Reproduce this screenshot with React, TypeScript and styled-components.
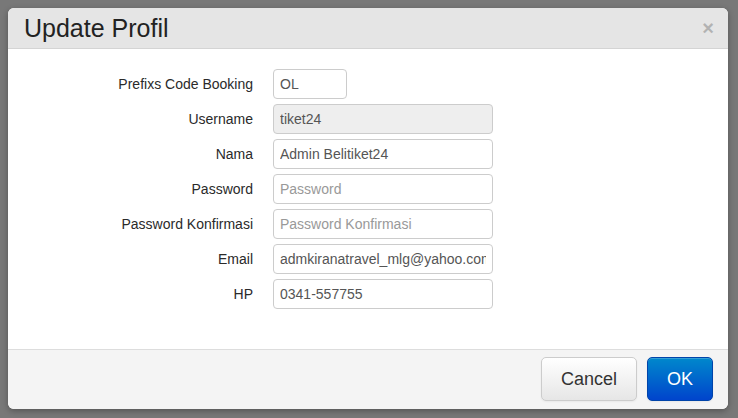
import React from "react";
import styled, { createGlobalStyle } from "styled-components";

const Global = createGlobalStyle`
  html, body { margin: 0; padding: 0; }
  body {
    background: #787878;
    font-family: "Liberation Sans", Arial, sans-serif;
    width: 738px;
    height: 418px;
    overflow: hidden;
  }
`;

const Backdrop = styled.div`
  width: 738px;
  height: 418px;
  box-sizing: border-box;
  padding: 8px 10px 9px 8px;
  background: #787878;
`;

const Modal = styled.div`
  width: 720px;
  height: 401px;
  display: flex;
  flex-direction: column;
  background: #fff;
  border-radius: 6px;
  overflow: hidden;
  box-shadow: 0 2px 6px rgba(0, 0, 0, 0.3);
`;

const Header = styled.div`
  height: 40px;
  flex: none;
  display: flex;
  align-items: center;
  justify-content: space-between;
  padding: 0 14px 0 16px;
  background: #e5e5e5;
  border-bottom: 1px solid #d4d4d4;
`;

const Title = styled.h3`
  margin: 0;
  font-size: 25px;
  font-weight: normal;
  color: #222;
  line-height: 40px;
`;

const Close = styled.button`
  border: 0;
  background: none;
  padding: 0;
  font-family: "Liberation Sans", Arial, sans-serif;
  font-size: 20px;
  font-weight: bold;
  line-height: 20px;
  color: #000;
  opacity: 0.22;
  cursor: pointer;
`;

const Body = styled.div`
  flex: 1;
  padding: 20px 15px 0 15px;
`;

const Form = styled.form`
  display: grid;
  grid-template-columns: 230px auto;
  column-gap: 20px;
  row-gap: 5px;
  align-items: center;
`;

const Label = styled.label`
  text-align: right;
  font-size: 14px;
  color: #2a2a2a;
`;

const Input = styled.input<{ $w?: number }>`
  box-sizing: border-box;
  width: ${(p) => p.$w ?? 220}px;
  height: 30px;
  padding: 0 6px;
  border: 1px solid #cccccc;
  border-radius: 4px;
  font-family: "Liberation Sans", Arial, sans-serif;
  font-size: 14px;
  color: #555;
  background: #fff;
  outline: none;
  &::placeholder { color: #999; }
  &:disabled { background: #eeeeee; color: #555; }
`;

const Footer = styled.div`
  flex: none;
  height: 60px;
  box-sizing: border-box;
  border-top: 1px solid #dddddd;
  background: #f4f4f4;
  display: flex;
  justify-content: flex-end;
  align-items: flex-start;
  gap: 10px;
  padding: 7px 15px 0 15px;
`;

const Button = styled.button<{ $primary?: boolean }>`
  height: 44px;
  padding: 0 19px;
  border-radius: 5px;
  font-family: "Liberation Sans", Arial, sans-serif;
  font-size: 18px;
  cursor: pointer;
  border: 1px solid ${(p) => (p.$primary ? "#0044aa" : "#cccccc")};
  color: ${(p) => (p.$primary ? "#fff" : "#333")};
  background: ${(p) =>
    p.$primary
      ? "linear-gradient(to bottom, #0088cc, #0044cc)"
      : "linear-gradient(to bottom, #ffffff, #e6e6e6)"};
  box-shadow: inset 0 1px 0 rgba(255, 255, 255, 0.2), 0 1px 2px rgba(0, 0, 0, 0.05);
`;

const fields: { label: string; value?: string; placeholder?: string; w?: number; disabled?: boolean }[] = [
  { label: "Prefixs Code Booking", value: "OL", w: 74 },
  { label: "Username", value: "tiket24", disabled: true },
  { label: "Nama", value: "Admin Belitiket24" },
  { label: "Password", placeholder: "Password" },
  { label: "Password Konfirmasi", placeholder: "Password Konfirmasi" },
  { label: "Email", value: "admkiranatravel_mlg@yahoo.com" },
  { label: "HP", value: "0341-557755" },
];

export default function App() {
  return (
    <>
      <Global />
      <Backdrop>
        <Modal>
          <Header>
            <Title>Update Profil</Title>
            <Close type="button">×</Close>
          </Header>
          <Body>
            <Form onSubmit={(e) => e.preventDefault()}>
              {fields.map((f) => (
                <React.Fragment key={f.label}>
                  <Label>{f.label}</Label>
                  <div>
                    <Input
                      $w={f.w}
                      defaultValue={f.value}
                      placeholder={f.placeholder}
                      disabled={f.disabled}
                    />
                  </div>
                </React.Fragment>
              ))}
            </Form>
          </Body>
          <Footer>
            <Button type="button">Cancel</Button>
            <Button type="button" $primary>
              OK
            </Button>
          </Footer>
        </Modal>
      </Backdrop>
    </>
  );
}
